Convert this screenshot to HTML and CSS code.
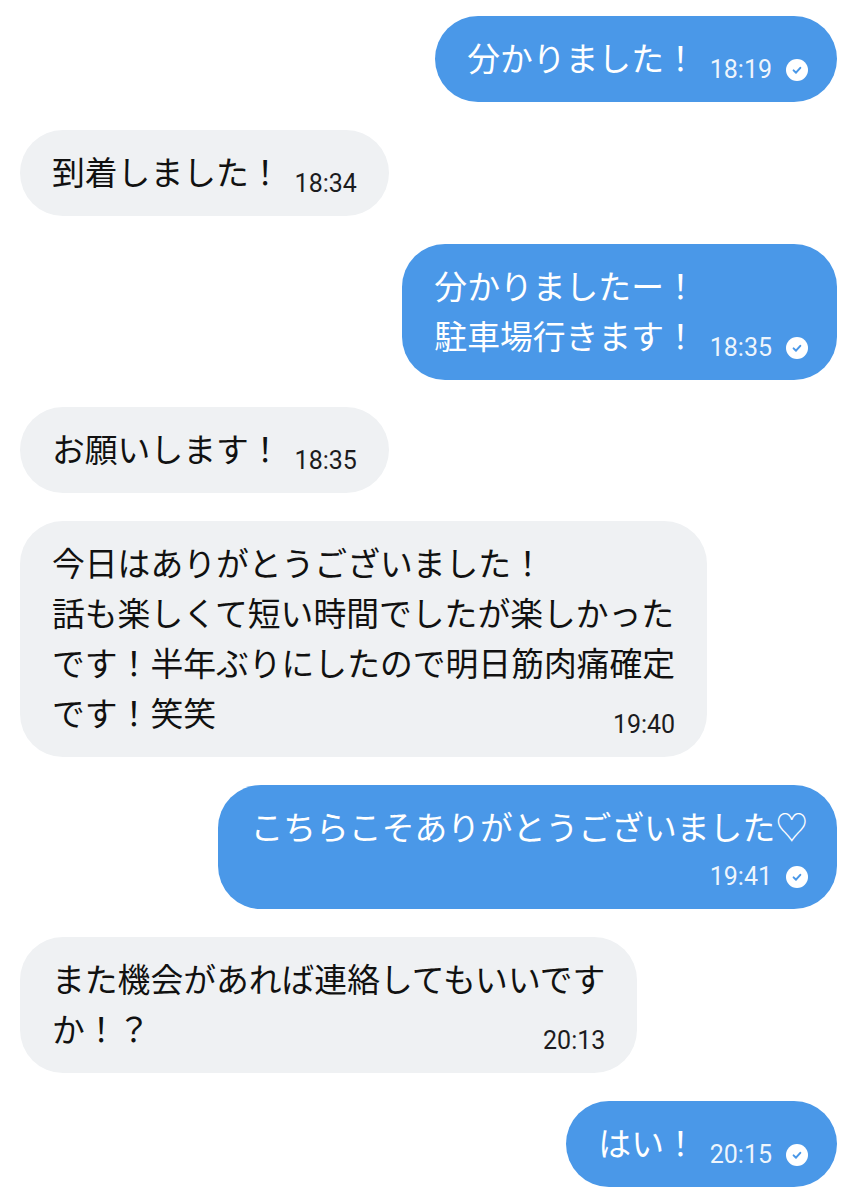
FILE: index.html
```html
<!DOCTYPE html>
<html lang="ja">
<head>
    <meta charset="UTF-8">
    <meta name="viewport" content="width=device-width, initial-scale=1.0">
    <title>チャット</title>
    <link rel="stylesheet" href="styles.css">
</head>
<body>
    <div class="chat">
        <div class="bubble out">
            <span class="text">分かりました！</span>
            <span class="meta"><span class="time">18:19</span><svg class="check" viewBox="0 0 22 22"><circle cx="11" cy="11" r="11" fill="#fff"/><path d="M7.6 11.4 L10 13.7 L14.3 8.8" fill="none" stroke="#4a98e8" stroke-width="2" stroke-linecap="round" stroke-linejoin="round"/></svg></span>
        </div>

        <div class="bubble in">
            <span class="text">到着しました！</span>
            <span class="meta"><span class="time">18:34</span></span>
        </div>

        <div class="bubble out">
            <span class="text">分かりましたー！<br>駐車場行きます！</span>
            <span class="meta"><span class="time">18:35</span><svg class="check" viewBox="0 0 22 22"><circle cx="11" cy="11" r="11" fill="#fff"/><path d="M7.6 11.4 L10 13.7 L14.3 8.8" fill="none" stroke="#4a98e8" stroke-width="2" stroke-linecap="round" stroke-linejoin="round"/></svg></span>
        </div>

        <div class="bubble in">
            <span class="text">お願いします！</span>
            <span class="meta"><span class="time">18:35</span></span>
        </div>

        <div class="bubble in">
            <span class="text">今日はありがとうございました！<br>話も楽しくて短い時間でしたが楽しかった<br>です！半年ぶりにしたので明日筋肉痛確定<br>です！笑笑</span>
            <span class="meta"><span class="time">19:40</span></span>
        </div>

        <div class="bubble out stacked">
            <span class="text">こちらこそありがとうございました♡</span>
            <span class="meta"><span class="time">19:41</span><svg class="check" viewBox="0 0 22 22"><circle cx="11" cy="11" r="11" fill="#fff"/><path d="M7.6 11.4 L10 13.7 L14.3 8.8" fill="none" stroke="#4a98e8" stroke-width="2" stroke-linecap="round" stroke-linejoin="round"/></svg></span>
        </div>

        <div class="bubble in">
            <span class="text">また機会があれば連絡してもいいです<br>か！？</span>
            <span class="meta"><span class="time">20:13</span></span>
        </div>

        <div class="bubble out">
            <span class="text">はい！</span>
            <span class="meta"><span class="time">20:15</span><svg class="check" viewBox="0 0 22 22"><circle cx="11" cy="11" r="11" fill="#fff"/><path d="M7.6 11.4 L10 13.7 L14.3 8.8" fill="none" stroke="#4a98e8" stroke-width="2" stroke-linecap="round" stroke-linejoin="round"/></svg></span>
        </div>
    </div>
</body>
</html>
```

FILE: styles.css
```css
body {
    margin: 0;
    background-color: #fff;
    font-family: "Noto Sans CJK JP", sans-serif;
}
.chat {
    display: flex;
    flex-direction: column;
    gap: 27.8px;
    padding: 16px 21px 0 20px;
}
.bubble {
    display: flow-root;
    max-width: 700px;
    padding: 16px 32px 20px;
    border-radius: 43px;
    font-size: 32.8px;
    line-height: 50px;
}
.bubble.in {
    align-self: flex-start;
    background-color: #eff1f3;
    color: #111;
}
.bubble.out {
    align-self: flex-end;
    background-color: #4a98e8;
    color: #fff;
    padding-right: 29px;
}
.meta {
    float: right;
    display: flex;
    align-items: center;
    margin: 26px 0 0 13px;
    height: 24px;
    line-height: 24px;
}
.time {
    font-family: Roboto, "Liberation Sans", sans-serif;
    font-size: 25px;
}
.bubble.in .time {
    color: #1c1c1e;
}
.bubble.out .time {
    color: rgba(255, 255, 255, 0.92);
}
.check {
    width: 22px;
    height: 22px;
    margin-left: 14px;
}
.bubble.stacked .meta {
    float: none;
    justify-content: flex-end;
    margin: 14px 0 0 0;
}
```
